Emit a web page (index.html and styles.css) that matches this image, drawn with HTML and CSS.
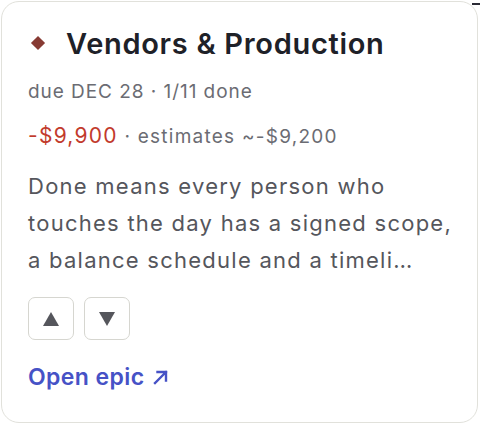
FILE: index.html
```html
<!DOCTYPE html>
<html>
<head>
<meta charset="utf-8">
<link rel="stylesheet" href="styles.css">
</head>
<body>
<div class="card">
  <div class="title-row">
    <span class="diamond"></span>
    <h2 class="title">Vendors &amp; Production</h2>
  </div>
  <div class="meta">due DEC 28 · 1/11 done</div>
  <div class="money"><span class="neg">-$9,900</span> · estimates ~-$9,200</div>
  <p class="desc">Done means every person who touches the day has a signed scope, a balance schedule and a timeli…</p>
  <div class="btns">
    <button class="btn" aria-label="Move up"><svg width="16" height="14" viewBox="0 0 16 14"><path d="M8 0 L16 14 L0 14 Z" fill="#55565c"/></svg></button>
    <button class="btn" aria-label="Move down"><svg width="16" height="14" viewBox="0 0 16 14"><path d="M0 0 L16 0 L8 14 Z" fill="#55565c"/></svg></button>
  </div>
  <a class="link" href="#">Open epic <svg width="17" height="17" viewBox="0 0 17 17"><path d="M3 14 L14 3 M5.5 3 H14 V11.5" stroke="#4652c6" stroke-width="2.4" fill="none" stroke-linecap="square"/></svg></a>
</div>
<div class="corner-mark"></div>
</body>
</html>
```
FILE: styles.css
```css
html, body {
  margin: 0;
  padding: 0;
  background: #ffffff;
}
body {
  font-family: Inter, "Noto Sans", sans-serif;
  width: 480px;
  height: 424px;
  position: relative;
  overflow: hidden;
}
.card {
  box-sizing: border-box;
  margin: 1px 0 0 1px;
  width: 477px;
  height: 422px;
  border: 1.5px solid #e1e1db;
  border-radius: 18px;
  padding: 18px 20px 0 26px;
  display: flex;
  flex-direction: column;
  align-items: flex-start;
}
.title-row {
  display: flex;
  align-items: center;
  gap: 23px;
  height: 46px;
}
.diamond {
  width: 10px;
  height: 10px;
  background: #873a33;
  transform: rotate(45deg);
  margin-left: 5px;
}
.title {
  margin: 0;
  font-size: 29px;
  font-weight: 600;
  color: #1e2128;
  letter-spacing: 0.7px;
}
.meta {
  margin-top: 14px;
  font-size: 19px;
  color: #6b6c73;
  letter-spacing: 0.95px;
}
.money {
  margin-top: 20px;
  font-size: 19px;
  color: #6b6c73;
  letter-spacing: 1.25px;
}
.neg {
  color: #c23a2c;
  font-size: 21px;
}
.desc {
  margin: 20px 0 0;
  font-size: 22px;
  line-height: 37px;
  color: #55565c;
  width: 440px;
  letter-spacing: 1.25px;
}
.btns {
  display: flex;
  gap: 10px;
  margin-top: 18px;
}
.btn {
  box-sizing: border-box;
  width: 46px;
  height: 43px;
  border: 1.5px solid #d6d6d0;
  border-radius: 7px;
  background: #fff;
  display: flex;
  align-items: center;
  justify-content: center;
  padding: 0;
}
.link {
  margin-top: 23px;
  font-size: 23px;
  font-weight: 600;
  color: #4652c6;
  text-decoration: none;
  display: flex;
  align-items: center;
  gap: 8px;
  letter-spacing: 0.4px;
}
.corner-mark {
  position: absolute;
  top: 3px;
  right: 0;
  width: 8px;
  height: 2px;
  background: #2a2a35;
}
```
